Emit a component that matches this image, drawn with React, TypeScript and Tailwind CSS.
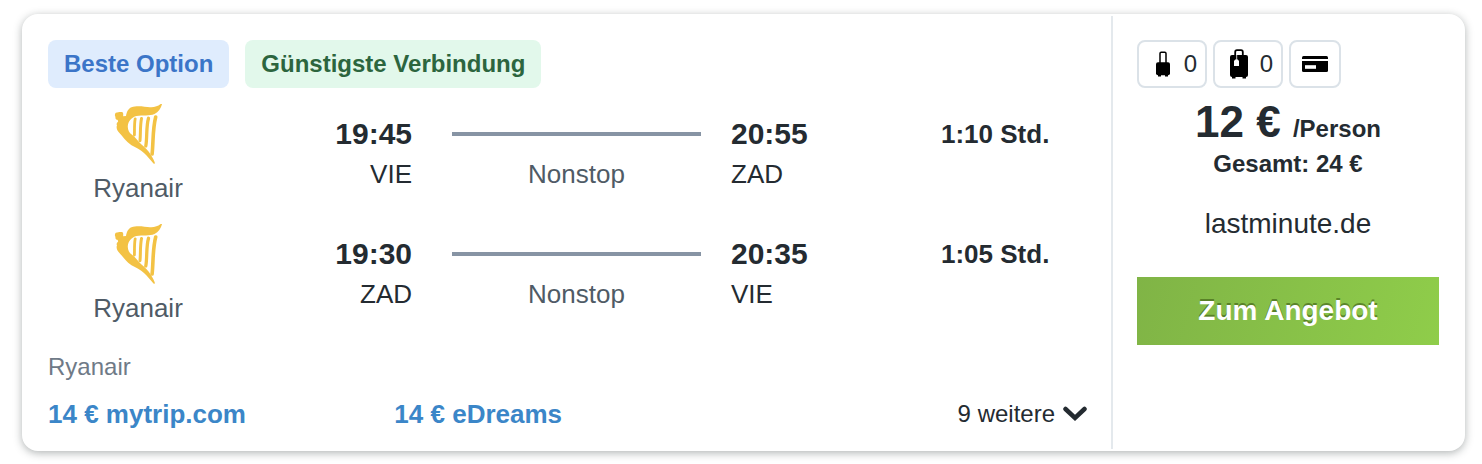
import type { ReactNode } from "react";

interface Leg {
  airline: string;
  depTime: string;
  depCode: string;
  arrTime: string;
  arrCode: string;
  stops: string;
  duration: string;
}

const LEGS: Leg[] = [
  {
    airline: "Ryanair",
    depTime: "19:45",
    depCode: "VIE",
    arrTime: "20:55",
    arrCode: "ZAD",
    stops: "Nonstop",
    duration: "1:10 Std.",
  },
  {
    airline: "Ryanair",
    depTime: "19:30",
    depCode: "ZAD",
    arrTime: "20:35",
    arrCode: "VIE",
    stops: "Nonstop",
    duration: "1:05 Std.",
  },
];

const OFFERS = [
  { price: "14 €", provider: "mytrip.com" },
  { price: "14 €", provider: "eDreams" },
];

function HarpLogo() {
  return (
    <svg viewBox="0 0 48 60" className="h-[60px] w-12" aria-hidden="true">
      <path
        fill="#f3c244"
        d="M48 .2C46.8 4.600 44.500 8 40.500 9.900C35.500 12 28.500 11 22.500 11.900C17.500 13.200 14.300 17 13.800 22C13.600 25.500 15 28.600 18 30.700C22 33.500 23.800 37 27.500 40.500C31 43.500 34.500 46.800 36.600 50.500C38.500 53.700 40.300 56.700 41 59.300C40.600 60 39.800 59.800 39.300 59.200C36.500 56 33.500 52.500 30 49C26.500 45.500 22 44 17.500 41.300C12 37.500 8.600 32.300 5 28.500C3 26.300 2 23.800 3 21.300C2.200 20.300 2.800 18.800 4 17.800C4.300 17 4 16.300 3.300 15.700C1.300 15.500 1.500 14 1.400 12.700C.6 11.500 .7 9.600 1.800 8.700C4 8.300 6.800 7.400 8.600 8.200C9.700 9.500 9 11 9.200 12.300L12 12C12.500 8.500 14 4.500 17.500 3.200C23 1.300 30.500 2.600 36 3.300C40.500 3.600 44 2 46.300 .3C47 -.1 47.700 -.1 48 .2Z"
      />
      <g fill="none" stroke="#f3c244" strokeLinecap="round">
        <path strokeWidth="2.8" d="M21.200 14.800C20.200 20 20.600 25.500 20.400 31" />
        <path strokeWidth="3" d="M27.500 14.500C26 22 26.700 30 26 36.700" />
        <path strokeWidth="3.3" d="M34.500 14.300C32 23 33.300 34 31.800 42" />
        <path strokeWidth="3.6" d="M41.700 13C38.500 25 39.400 39 38.100 50" />
      </g>
    </svg>
  );
}

function CabinBagIcon() {
  return (
    <svg viewBox="0 0 14 26" className="h-[26px] w-3.5" aria-hidden="true">
      <path d="M4 12V2.500Q4 1.200 5.200 1.200H8.800Q10 1.200 10 2.500V12" fill="none" stroke="#000" strokeWidth="1.5" />
      <rect y="11.200" width="14" height="13" rx="2" />
      <path d="M2 24h3v1.500H2zM9 24h3v1.500H9z" />
    </svg>
  );
}

function SuitcaseIcon() {
  return (
    <svg viewBox="0 0 18 30" className="h-[30px] w-[18px]" aria-hidden="true">
      <path d="M5.200 7V3Q5.200 1.200 7 1.200H11Q12.800 1.200 12.800 3V7" fill="none" stroke="#000" strokeWidth="1.800" />
      <rect y="6" width="18" height="22" rx="2" />
      <path d="M2 27h3.500v2.500H2zM12.500 27H16v2.500h-3.500z" />
      <path d="M6.700 5v6" stroke="#fff" strokeWidth=".8" />
      <path fill="#fff" d="M4 12l1.200-1.500h2.600L9 12v5H4z" />
    </svg>
  );
}

function CardIcon() {
  return (
    <svg viewBox="0 0 26 16" className="h-4 w-[26px]" aria-hidden="true">
      <path d="M0 3V1.500Q0 0 1.500 0H24.500Q26 0 26 1.500V3z" />
      <path d="M0 5H26V14.500Q26 16 24.500 16H1.500Q0 16 0 14.500z" />
      <path fill="#fff" d="M3 9.200h11v3.600H3z" />
    </svg>
  );
}

function BaggageBox({ icon, count }: { icon: ReactNode; count: number }) {
  return (
    <div className="flex h-12 w-[70px] items-center justify-end rounded-lg border-2 border-[#dbe2e8] pr-2 text-2xl leading-8">
      <span className="flex flex-1 justify-center pl-1">{icon}</span>
      <span>{count}</span>
    </div>
  );
}

function LegRow({ leg }: { leg: Leg }) {
  return (
    <div className="grid h-[120px] grid-cols-[180fr_184fr_319fr_210fr_146fr] pt-2 text-[26px] leading-10">
      <div className="flex flex-col items-center gap-1 text-[#4f5b66]">
        <HarpLogo />
        <span>{leg.airline}</span>
      </div>
      <div className="pt-2.5 text-right">
        <p className="text-3xl leading-10 font-bold">{leg.depTime}</p>
        <p>{leg.depCode}</p>
      </div>
      <div className="pt-2.5 pr-[30px] pl-10 text-center text-[#4f5b66]">
        <div className="flex h-10 items-center">
          <div className="h-1 w-full bg-[#8794a4]" />
        </div>
        <p>{leg.stops}</p>
      </div>
      <div className="pt-2.5">
        <p className="text-3xl leading-10 font-bold">{leg.arrTime}</p>
        <p>{leg.arrCode}</p>
      </div>
      <p className="pt-2.5 font-bold whitespace-nowrap">{leg.duration}</p>
    </div>
  );
}

export default function App() {
  return (
    <main className="bg-white pt-3.5 pr-[17px] pb-3 pl-[22px] font-['Liberation_Sans',Arial,sans-serif] text-[#242b31]">
      <article className="flex rounded-2xl border-2 border-white bg-white shadow-[0_2px_8px_rgba(30,40,40,0.35)]">
        <section className="flex-1 px-6 pt-6 pb-[19px]">
          <div className="mb-2 flex gap-4 text-2xl leading-8 font-bold">
            <span className="rounded-lg bg-[#dfecfd] px-4 py-2 text-[#3b75c8]">Beste Option</span>
            <span className="rounded-lg bg-[#e2f8eb] px-4 py-2 text-[#2c653e]">Günstigste Verbindung</span>
          </div>
          {LEGS.map((leg) => (
            <LegRow key={leg.depTime} leg={leg} />
          ))}
          <p className="mt-[15px] text-2xl leading-8 text-[#6f7a87]">Ryanair</p>
          <div className="mt-[15px] grid grid-cols-3 text-[26px] leading-8">
            {OFFERS.map((o) => (
              <a key={o.provider} href="#" className="font-bold text-[#3b86c8]">
                {o.price} {o.provider}
              </a>
            ))}
            <button type="button" className="flex items-center justify-end gap-2 text-2xl leading-8">
              9 weitere
              <svg viewBox="0 0 24 16" className="h-4 w-6" aria-hidden="true">
                <path d="M2.500 3L12 12L21.500 3" fill="none" stroke="currentColor" strokeWidth="4.500" strokeLinecap="round" />
              </svg>
            </button>
          </div>
        </section>

        <div className="w-0.5 bg-[#e4e9ed]" />

        <aside className="w-[350px] p-6 text-center">
          <div className="flex gap-1.5">
            <BaggageBox icon={<CabinBagIcon />} count={0} />
            <BaggageBox icon={<SuitcaseIcon />} count={0} />
            <div className="flex h-12 w-[52px] items-center justify-center rounded-lg border-2 border-[#dbe2e8]">
              <CardIcon />
            </div>
          </div>
          <p className="mt-2 text-[44px] leading-[52px] font-bold">
            12 € <span className="text-2xl">/Person</span>
          </p>
          <p className="text-2xl leading-8 font-bold">Gesamt: 24 €</p>
          <p className="mt-6 text-[28px] leading-10">lastminute.de</p>
          <button
            type="button"
            className="mt-[33px] h-[68px] w-full bg-linear-[105deg] from-[#80b446] to-[#8fcd4a] text-[28px] font-bold text-white [text-shadow:0_-2px_0_rgba(60,90,20,0.6)]"
          >
            Zum Angebot
          </button>
        </aside>
      </article>
    </main>
  );
}
